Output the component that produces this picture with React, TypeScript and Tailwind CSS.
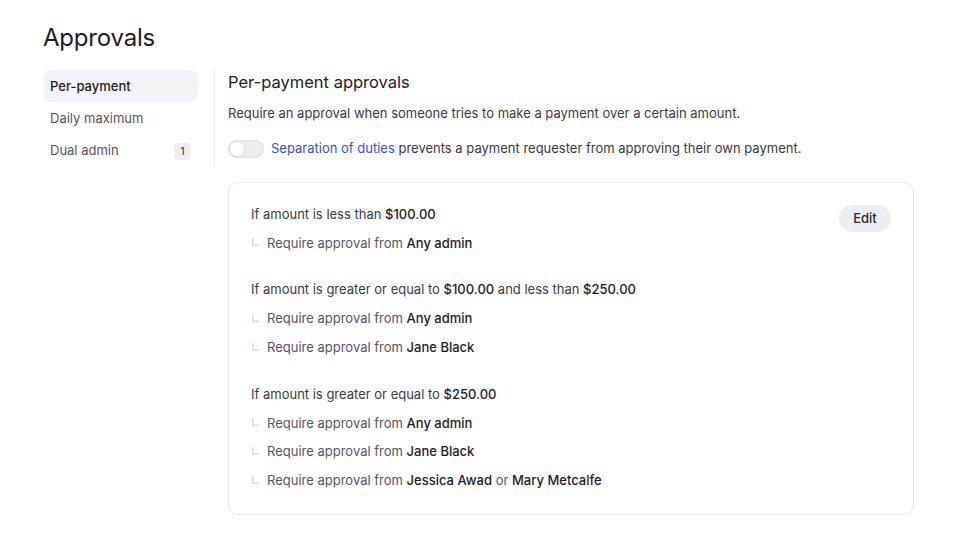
import React from "react";

function Sub({ children }: { children: React.ReactNode }) {
  return (
    <div className="flex items-center h-[28.7px]">
      <svg width="16" height="16" viewBox="0 0 16 16" className="shrink-0">
        <path d="M1.75 3 V10.25 H8" fill="none" stroke="#d8d8f0" strokeWidth="1.5" />
      </svg>
      <span className="text-[#55555f]">{children}</span>
    </div>
  );
}

function B({ children }: { children: React.ReactNode }) {
  return <span className="font-medium text-[#1d1d24]">{children}</span>;
}

function Cond({ children, first }: { children: React.ReactNode; first?: boolean }) {
  return (
    <div className={first ? "flex items-center h-[29px] whitespace-pre" : "flex items-center h-[29px] mt-[18px] whitespace-pre"}>
      {children}
    </div>
  );
}

export default function App() {
  return (
    <div className="min-h-[557px] bg-white text-[13px] text-[#3a3a44]" style={{ fontFamily: "Inter, 'Noto Sans', sans-serif" }}>
      <div className="pl-[43px] pt-[23px]">
        <h1 className="text-[24px] leading-[30px] text-[#1d1d24] tracking-[-0.2px]">Approvals</h1>
        <div className="flex mt-[17px]">
          <div className="w-[155px] flex flex-col">
            <div className="h-[32px] px-[7px] flex items-center rounded-[8px] bg-[#f4f4f6] font-medium text-[#1d1d24] pt-[1px]">Per-payment</div>
            <div className="h-[32px] px-[7px] flex items-center text-[#55555f] pt-[1px]">Daily maximum</div>
            <div className="h-[33px] px-[7px] flex items-center justify-between text-[#55555f] pt-[1px]">
              <span>Dual admin</span>
              <span className="w-[17px] h-[17px] rounded-[4px] bg-[#efeff3] text-[11px] flex items-center justify-center text-[#3a3a44]">1</span>
            </div>
          </div>
          <div className="ml-[16px] w-px bg-[#ececf0] h-[97px]"></div>
          <div className="ml-[13px] w-[686px]">
            <h2 className="text-[16.5px] leading-[24px] text-[#1d1d24]">Per-payment approvals</h2>
            <p className="mt-[11px] leading-[16px] text-[#3a3a44]">Require an approval when someone tries to make a payment over a certain amount.</p>
            <div className="flex items-center mt-[18px] h-[20px]">
              <div className="w-[36px] h-[18px] rounded-full bg-[#ededf1] border border-[#dedee5] relative mr-[7px]">
                <div className="absolute left-0 top-0 w-[16px] h-[16px] rounded-full bg-white border border-[#dedee5]"></div>
              </div>
              <span>
                <span className="text-[#3c4fd8]">Separation of duties</span> prevents a payment requester from approving their own payment.
              </span>
            </div>
            <div className="mt-[23px] border border-[#e6e6ec] rounded-[10px] pl-[22px] pr-[22px] pt-[17px] pb-[19px] flex justify-between">
              <div className="flex flex-col">
                <Cond first>If amount is less than <B>$100.00</B></Cond>
                <Sub>Require approval from <B>Any admin</B></Sub>
                <Cond>If amount is greater or equal to <B>$100.00</B> and less than <B>$250.00</B></Cond>
                <Sub>Require approval from <B>Any admin</B></Sub>
                <Sub>Require approval from <B>Jane Black</B></Sub>
                <Cond>If amount is greater or equal to <B>$250.00</B></Cond>
                <Sub>Require approval from <B>Any admin</B></Sub>
                <Sub>Require approval from <B>Jane Black</B></Sub>
                <Sub>Require approval from <B>Jessica Awad</B> or <B>Mary Metcalfe</B></Sub>
              </div>
              <div>
                <button className="h-[27px] w-[52px] rounded-full bg-[#eeeef2] text-[#2a2a33] text-[13px] font-medium mt-[5px]">Edit</button>
              </div>
            </div>
          </div>
        </div>
      </div>
    </div>
  );
}
